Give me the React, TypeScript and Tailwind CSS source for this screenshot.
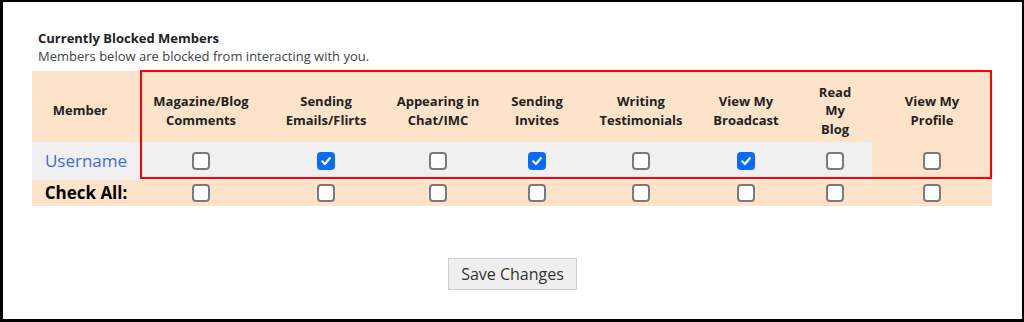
import React from 'react';

const columns = [
  'Magazine/Blog Comments',
  'Sending Emails/Flirts',
  'Appearing in Chat/IMC',
  'Sending Invites',
  'Writing Testimonials',
  'View My Broadcast',
  'Read My Blog',
  'View My Profile',
];

const headerLines: string[][] = [
  ['Magazine/Blog', 'Comments'],
  ['Sending', 'Emails/Flirts'],
  ['Appearing in', 'Chat/IMC'],
  ['Sending', 'Invites'],
  ['Writing', 'Testimonials'],
  ['View My', 'Broadcast'],
  ['Read', 'My', 'Blog'],
  ['View My', 'Profile'],
];

const blocked = [false, true, false, true, false, true, false, false];

const gridCols = 'grid grid-cols-[108px_122px_128px_96px_102px_106px_104px_74px_120px]';

const Box = ({ checked }: { checked?: boolean }) =>
  checked ? (
    <span className="w-[18px] h-[18px] rounded-[4px] bg-[#0a6cf5] flex items-center justify-center">
      <svg width="12" height="12" viewBox="0 0 12 12" fill="none">
        <path d="M2.2 6.3 L4.9 9 L9.8 3.2" stroke="white" strokeWidth="2.2" strokeLinecap="round" strokeLinejoin="round" />
      </svg>
    </span>
  ) : (
    <span className="w-[18px] h-[18px] rounded-[4px] border-2 border-[#7a7a7a] bg-white" />
  );

export default function App() {
  return (
    <div
      className="w-[1024px] h-[322px] bg-white border-t-2 border-r-2 border-b-[3px] border-l-[3px] border-black pt-[27px] pl-[29px]"
      style={{ fontFamily: '"Open Sans", "Liberation Sans", sans-serif' }}
    >
      <div className="pl-[6px] text-[13px] leading-[18px]">
        <div className="font-bold text-[#222]">Currently Blocked Members</div>
        <div className="text-[#444]">Members below are blocked from interacting with you.</div>
      </div>

      <div className="relative mt-[6px] w-[960px] bg-[#fde3c9]">
        <div className={`${gridCols} h-[71px] pt-2`}>
          <div className="flex items-center justify-center pr-3 text-[13px] font-bold text-[#222]">Member</div>
          {headerLines.map((lines, i) => (
            <div key={columns[i]} className="flex flex-col items-center justify-center text-[13px] leading-[18.5px] font-bold text-[#222] text-center">
              {lines.map(l => (
                <span key={l}>{l}</span>
              ))}
            </div>
          ))}
        </div>

        <div className={`${gridCols} h-[38px]`}>
          <div className="bg-[#f0f0f0] flex items-center justify-center text-[17px] text-[#3b6fd4]">Username</div>
          {blocked.map((b, i) => (
            <div key={columns[i]} className={`flex items-center justify-center ${i < 7 ? 'bg-[#f0f0f0]' : ''}`}>
              <Box checked={b} />
            </div>
          ))}
        </div>

        <div className={`${gridCols} h-[26px]`}>
          <div className="flex items-center justify-center text-[17px] font-bold text-black">Check All:</div>
          {columns.map(c => (
            <div key={c} className="flex items-center justify-center">
              <Box />
            </div>
          ))}
        </div>

        {/* annotation box */}
        <div className="absolute left-[108px] top-[-1px] w-[852px] h-[109px] border-2 border-[#f00] pointer-events-none" />
      </div>

      <div className="flex justify-center mt-[52px] pr-[29px]">
        <button className="w-[129px] h-[32px] bg-[#efefef] border border-[#cfcfcf] text-[16px] text-[#333]">
          Save Changes
        </button>
      </div>
    </div>
  );
}
